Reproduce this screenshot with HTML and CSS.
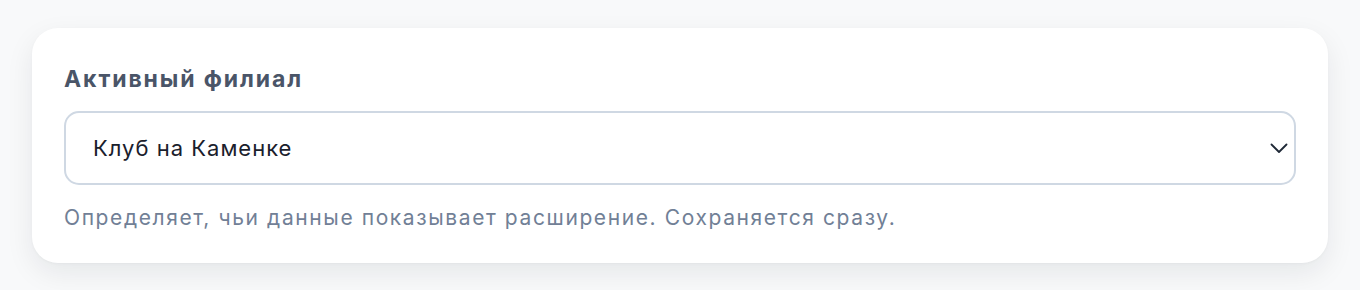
FILE: index.html
```html
<!DOCTYPE html>
<html lang="ru">
<head>
    <meta charset="UTF-8">
    <meta name="viewport" content="width=device-width, initial-scale=1.0">
    <title>Настройки</title>
    <link rel="stylesheet" href="styles.css">
</head>
<body>
    <div class="page">
        <div class="card">
            <label class="field-label" for="branch">Активный филиал</label>
            <div class="select-wrap">
                <select id="branch" class="select">
                    <option>Клуб на Каменке</option>
                </select>
                <svg class="chevron" width="18" height="10" viewBox="0 0 18 10" fill="none">
                    <path d="M1.5 1.5l7.5 7.5 7.5-7.5" stroke="#1f2937" stroke-width="1.8" stroke-linecap="round" stroke-linejoin="round"/>
                </svg>
            </div>
            <p class="hint">Определяет, чьи данные показывает расширение. Сохраняется сразу.</p>
        </div>
    </div>
</body>
</html>
```

FILE: styles.css
```css
* {
    margin: 0;
    padding: 0;
    box-sizing: border-box;
}

body {
    font-family: Inter, 'Noto Sans', sans-serif;
    background: #f8f9fa;
    color: #1a202c;
}

.page {
    padding: 28px 32px;
}

.card {
    background: #fff;
    border-radius: 26px;
    padding: 32px 32px 31px;
    box-shadow: 0 10px 28px rgba(17, 24, 39, 0.08), 0 1px 3px rgba(17, 24, 39, 0.03);
}

.field-label {
    display: block;
    font-size: 23px;
    font-weight: 700;
    line-height: 38px;
    letter-spacing: 1.9px;
    color: #4a5568;
    margin-bottom: 13px;
}

.select-wrap {
    position: relative;
}

.select {
    display: block;
    width: 100%;
    height: 74px;
    padding: 0 56px 0 27px;
    font-family: inherit;
    font-size: 22px;
    letter-spacing: 1px;
    color: #1a202c;
    background: #fff;
    border: 2px solid #cfd8e3;
    border-radius: 15px;
    appearance: none;
    -webkit-appearance: none;
    outline: none;
}

.chevron {
    position: absolute;
    right: 8px;
    top: 50%;
    transform: translateY(-50%);
    pointer-events: none;
}

.hint {
    margin-top: 19px;
    font-size: 21px;
    line-height: 28px;
    letter-spacing: 1.6px;
    color: #718096;
}
```
